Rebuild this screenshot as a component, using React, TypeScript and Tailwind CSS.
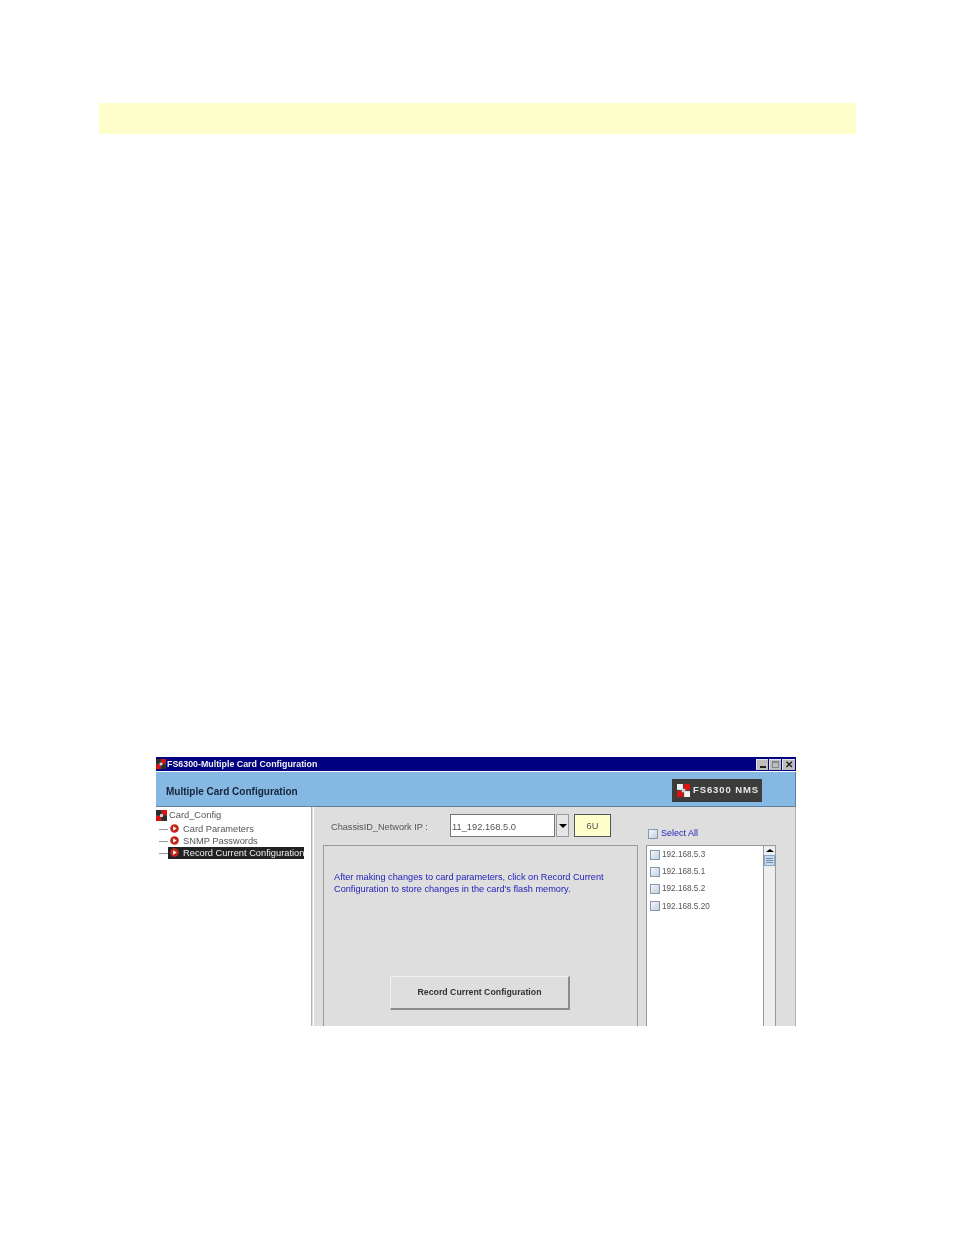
const font = "[font-family:'Liberation_Sans',Arial,sans-serif]";

function AppLogo({ size = 11, light }: { size?: number; light?: boolean }) {
  const a = light ? "#f2f2f2" : "#2c2c2c";
  return (
    <svg width={size} height={size} viewBox="0 0 11 11" className="shrink-0">
      <rect width="11" height="11" fill="#444444" />
      <rect x="0" y="0" width="5" height="5" fill={a} />
      <rect x="6" y="0" width="5" height="5" fill="#e01010" />
      <rect x="0" y="6" width="5" height="5" fill="#e01010" />
      <rect x="6" y="6" width="5" height="5" fill={a} />
      <rect x="4" y="4" width="3" height="3" fill="#d0d0d0" />
    </svg>
  );
}

function Bullet() {
  return (
    <svg width="9" height="9" viewBox="0 0 9 9" className="shrink-0">
      <circle cx="4.5" cy="4.5" r="4.3" fill="#c0281c" />
      <path d="M3.2 2.2 L6.6 4.5 L3.2 6.8 Z" fill="#ffffff" />
    </svg>
  );
}

function WinBtn({ children, wide }: { children: React.ReactNode; wide?: boolean }) {
  return (
    <div className={`flex h-[11px] ${wide ? "w-[13px]" : "w-[12px]"} items-center justify-center bg-[#bdbdbd] border-t border-l border-t-[#e4e4e4] border-l-[#e4e4e4]`}>
      {children}
    </div>
  );
}

function Check() {
  return <div className="h-[10px] w-[10px] shrink-0 border border-[#8a98a6] bg-gradient-to-br from-[#f4f7fb] to-[#bfd0e4]" />;
}

function TreeRow({ label, selected }: { label: string; selected?: boolean }) {
  return (
    <div className="flex h-[12px] items-center">
      <div className="h-px w-[9px] bg-[#999]" />
      <div className={`flex h-[12px] items-center ${selected ? "w-[136px] bg-[#222] text-[#eeeeee]" : "text-[#555]"}`}>
        <span className="mb-[1px] ml-[2px] mr-[4px] flex"><Bullet /></span>
        <span className="whitespace-nowrap pt-[1px] text-[9.3px] leading-none">{label}</span>
      </div>
    </div>
  );
}

export default function App() {
  const ips = ["192.168.5.3", "192.168.5.1", "192.168.5.2", "192.168.5.20"];
  return (
    <div className={`min-h-[1235px] bg-white pt-[103px] ${font}`}>
      <div className="mx-[99px] h-[31px] w-[757px] bg-[#ffffcc]" />

      <div className="ml-[156px] mt-[623px] flex h-[269px] w-[640px] flex-col overflow-hidden blur-[0.3px]">
        {/* title bar */}
        <div className="flex h-[14px] shrink-0 items-center bg-[#000080] pr-[1px]">
          <AppLogo size={10} />
          <span className="ml-[1px] text-[8.85px] font-bold leading-none text-[#f0f0f0]">FS6300-Multiple Card Configuration</span>
          <div className="ml-auto flex gap-[1px]">
            <WinBtn><div className="mt-[5px] h-[2px] w-[6px] bg-[#222]" /></WinBtn>
            <WinBtn><div className="h-[7px] w-[7px] border border-[#888] border-t-2" /></WinBtn>
            <WinBtn wide><span className="text-[10px] font-bold leading-none text-[#222]">✕</span></WinBtn>
          </div>
        </div>

        {/* header */}
        <div className="mt-px flex h-[35px] shrink-0 items-center justify-between border-b border-r border-[#5f7f9a] bg-[#85b8e3] pl-[10px] pr-[33px] pt-[2px]">
          <span className="mt-[3px] text-[10px] font-bold text-[#15233a]">Multiple Card Configuration</span>
          <div className="flex h-[23px] w-[90px] items-center gap-[3px] bg-[#3c3c3c] pl-[5px]">
            <AppLogo size={13} light />
            <span className="mt-[1px] text-[9.5px] font-bold tracking-[0.9px] text-[#e8e8e8] whitespace-nowrap">FS6300 NMS</span>
          </div>
        </div>

        {/* body */}
        <div className="flex min-h-0 flex-1">
          {/* tree */}
          <div className="w-[155px] shrink-0 bg-white pt-[2px]">
            <div className="flex h-[13px] items-center gap-[2px] text-[#555]">
              <AppLogo size={11} />
              <span className="text-[9.3px] leading-none">Card_Config</span>
            </div>
            <div className="ml-[3px] mt-px">
              <TreeRow label="Card Parameters" />
              <TreeRow label="SNMP Passwords" />
              <TreeRow label="Record Current Configuration" selected />
            </div>
          </div>

          {/* main panel */}
          <div className="flex min-w-0 flex-1 border-l border-r border-[#b4b4b4] bg-[#dedede] pl-[1px]">
            <div className="flex flex-1 border-l border-white pl-[9px]">
              {/* center column */}
              <div className="flex w-[315px] shrink-0 flex-col pt-[7px]">
                <div className="flex h-[23px] items-center pl-[8px]">
                  <span className="w-[119px] pt-[4px] text-[9.2px] text-[#555]">ChassisID_Network IP :</span>
                  <div className="flex h-[23px] w-[105px] items-center border border-[#777] bg-white pl-[1px] pt-[4px] text-[9.3px] text-[#555]">
                    11_192.168.5.0
                  </div>
                  <div className="ml-[1px] flex h-[23px] w-[13px] items-center justify-center border border-[#999] bg-[#e6e6e6]">
                    <div className="h-0 w-0 border-x-[4px] border-t-[4px] border-x-transparent border-t-black" />
                  </div>
                  <div className="ml-[5px] flex h-[23px] w-[37px] items-center justify-center border border-[#555] bg-[#ffffcc] pt-[3px] text-[9.3px] text-[#555]">
                    6U
                  </div>
                </div>
                <div className="mt-[8px] flex min-h-0 flex-1 flex-col border border-b-0 border-[#999] px-[10px] pt-[25px]">
                  <p className="w-[292px] text-[9.2px] leading-[12px] text-[#2222bb]">
                    After making changes to card parameters, click on Record Current Configuration to store changes in the card's flash memory.
                  </p>
                  <button className="ml-[56px] mt-[81px] flex h-[34px] w-[180px] shrink-0 items-center justify-center border border-[#f0f0f0] border-b-2 border-r-2 border-b-[#8c8c8c] border-r-[#8c8c8c] bg-[#dedede] pt-[1px] text-[8.75px] font-bold text-[#333]">
                    Record Current Configuration
                  </button>
                </div>
              </div>

              {/* list column */}
              <div className="ml-[8px] flex w-[130px] shrink-0 flex-col">
                <div className="flex h-[38px] shrink-0 items-end gap-[3px] pb-[6px] pl-[2px]">
                  <Check />
                  <span className="text-[9px] leading-[11px] text-[#2222bb]">Select All</span>
                </div>
                <div className="flex min-h-0 flex-1 border border-b-0 border-[#999] bg-white">
                  <div className="flex flex-1 flex-col gap-[7.3px] pl-[3px] pt-[3.5px]">
                    {ips.map((ip) => (
                      <div key={ip} className="flex h-[10px] items-center gap-[2px]">
                        <Check />
                        <span className="pt-[1px] text-[8.2px] leading-none text-[#555]">{ip}</span>
                      </div>
                    ))}
                  </div>
                  <div className="flex w-[12px] shrink-0 flex-col items-center border-l border-[#999] bg-[#eceeef]">
                    <div className="mt-[3px] h-0 w-0 border-x-[4px] border-b-[3px] border-x-transparent border-b-black" />
                    <div className="mt-[3px] flex h-[11px] w-[11px] flex-col items-center justify-center gap-px border border-[#8aa8c8] bg-[#c7d9ee]">
                      <div className="h-px w-[7px] bg-[#6f8fb0]" />
                      <div className="h-px w-[7px] bg-[#6f8fb0]" />
                      <div className="h-px w-[7px] bg-[#6f8fb0]" />
                    </div>
                  </div>
                </div>
              </div>
            </div>
          </div>
        </div>
      </div>
    </div>
  );
}
